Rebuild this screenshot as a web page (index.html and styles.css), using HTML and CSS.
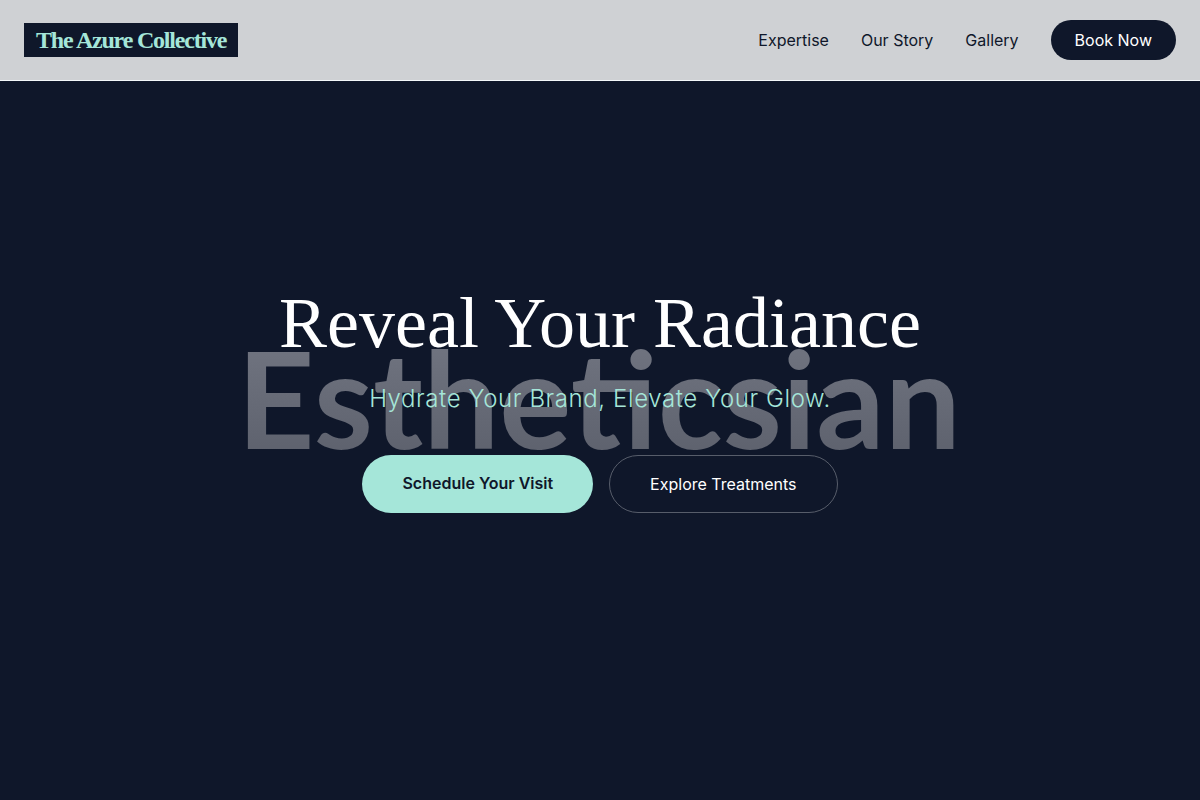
FILE: index.html
```html
<!DOCTYPE html>
<html lang="en">
<head>
    <meta charset="UTF-8">
    <meta name="viewport" content="width=device-width, initial-scale=1.0">
    <title>The Azure Collective</title>
    <link rel="stylesheet" href="styles.css">
</head>
<body>

<!-- Header -->
<header class="site-header">
    <a href="#" class="logo">The Azure Collective</a>
    <nav class="nav">
        <a href="#expertise" class="nav-link">Expertise</a>
        <a href="#story" class="nav-link">Our Story</a>
        <a href="#gallery" class="nav-link">Gallery</a>
        <a href="#book" class="nav-btn">Book Now</a>
    </nav>
</header>

<!-- Hero -->
<main class="hero">
    <div class="watermark" aria-hidden="true"><span class="watermark-text">Estheticsian</span></div>
    <div class="hero-content">
        <h1>Reveal Your Radiance</h1>
        <p class="tagline">Hydrate Your Brand, Elevate Your Glow.</p>
        <div class="hero-actions">
            <a href="#book" class="btn btn-primary">Schedule Your Visit</a>
            <a href="#expertise" class="btn btn-outline">Explore Treatments</a>
        </div>
    </div>
</main>

</body>
</html>
```
FILE: styles.css
```css
* {
    box-sizing: border-box;
}

body {
    font-family: Inter, sans-serif;
    font-size: 16px;
    line-height: 24px;
    background-color: #0f172a;
    color: white;
    margin: 0;
}

a {
    text-decoration: none;
}

.site-header {
    position: fixed;
    top: 0;
    left: 0;
    right: 0;
    z-index: 10;
    display: flex;
    align-items: center;
    justify-content: space-between;
    padding: 20px 24px;
    background-color: #cfd1d4;
    border-bottom: 1px solid #f4f8fa;
}

.logo {
    padding: 1px 12px;
    background-color: #0f172a;
    color: #a5e6d9;
    font-family: "Liberation Serif", serif;
    font-size: 24px;
    line-height: 32px;
    font-weight: bold;
    letter-spacing: -0.05em;
}

.nav {
    display: flex;
    align-items: center;
    gap: 32px;
}

.nav-link {
    color: #0f172a;
}

.nav-btn {
    padding: 8px 24px;
    border-radius: 20px;
    background-color: #0f172a;
    color: white;
}

.hero {
    position: relative;
    display: flex;
    align-items: center;
    justify-content: center;
    min-height: 100vh;
    overflow: hidden;
}

/* Large word behind the hero content */
.watermark {
    position: absolute;
    inset: 0;
    display: flex;
    align-items: center;
    justify-content: center;
    padding: 0 2px 6px 0;
}

.watermark-text {
    font-family: Lato, sans-serif;
    font-size: 135px;
    line-height: 1;
    font-weight: bold;
    background: linear-gradient(#727682, #5c606c);
    -webkit-background-clip: text;
    background-clip: text;
    color: transparent;
}

.hero-content {
    position: relative;
    text-align: center;
}

h1 {
    margin: 0 0 24px;
    font-family: "Liberation Serif", serif;
    font-size: 72px;
    line-height: 72px;
    font-weight: normal;
}

.tagline {
    margin: 0 0 40px;
    font-size: 24px;
    line-height: 32px;
    font-weight: 300;
    letter-spacing: 0.025em;
    color: #a5e6d9;
}

.hero-actions {
    display: flex;
    justify-content: center;
    gap: 16px;
}

.btn {
    padding: 16px 40px;
    border-radius: 29px;
}

.btn-primary {
    background-color: #a5e6d9;
    color: #0f172a;
    font-weight: 600;
}

.btn-outline {
    border: 1px solid #575d6a;
    color: white;
}
```
